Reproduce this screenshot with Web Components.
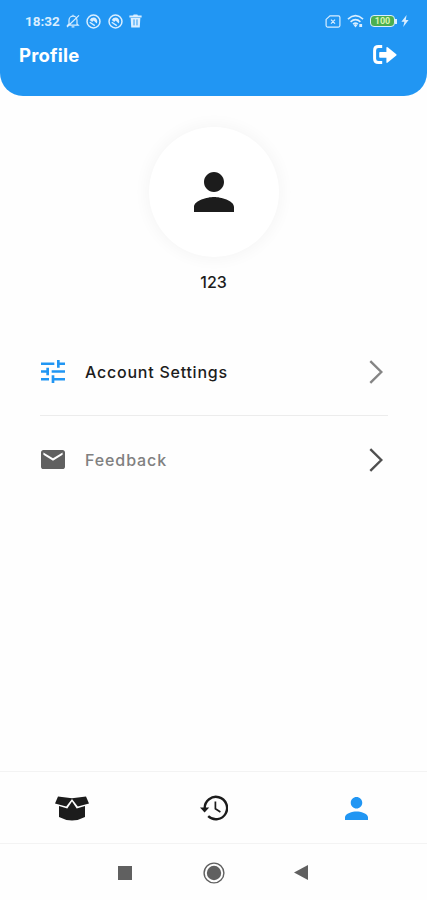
<!DOCTYPE html>
<html lang="en">
<head>
<meta charset="utf-8">
<meta name="viewport" content="width=device-width, initial-scale=1">
<title>Profile</title>
<style>
    body {
        margin: 0;
        background: #fefefe;
        color: #1c1c1c;
        font-family: Inter, "Open Sans", sans-serif;
    }
</style>
</head>
<body>
<profile-app></profile-app>

<script>
// name: [viewBox, markup]
const ICONS = {
    bell: ['0 0 14 14', '<path d="M3 10V6.2a4 4 0 0 1 8 0V10l1.2 1.2H1.8zM5.6 12.8h2.8M7 .7v1.4M1 13 13 1.4" fill="none" stroke="currentColor" stroke-width="1.2"/>'],
    shield: ['0 0 16 16', '<circle cx="8" cy="8" r="6.9" fill="none" stroke="currentColor" stroke-width="1.6"/><path d="M4 6.4Q5.6 3.6 8.4 3.8T12 7.6q0 1.6-.6 2.6L8.2 7 6.6 8.4z" fill="currentColor"/><path d="m4 8.8 5.4 3.6" stroke="currentColor" stroke-width="1.5"/>'],
    trash: ['0 0 14 14', '<path d="M.4 1.4h4l.6-.9h4l.6.9h4v2.2H.4zM1.8 4h10.4l-.6 9.6H2.4z" fill="currentColor"/><path d="M5.4 5.4v6M8.6 5.4v6" stroke="#2196f3" stroke-width="1"/>'],
    sim: ['0 0 16 13', '<path d="M5 .9h8.4q1.5 0 1.5 1.5v8.2q0 1.5-1.5 1.5H2.6q-1.5 0-1.5-1.5V4.4zM6 4.6l4 4M10 4.6l-4 4" fill="none" stroke="currentColor" stroke-width="1.2"/>'],
    wifi: ['0 0 18 14', '<path d="M1 5.1q8-6.8 16 0M3.8 7.8q5.2-4.4 10.4 0M6.4 10.2q2.6-2.2 5.2 0" fill="none" stroke="currentColor" stroke-width="1.7"/><path d="m7 11 2-1 2 1-2 2.4zM13 10h3v3h-3z" fill="currentColor"/>'],
    bolt: ['0 0 8 12', '<path d="M5.6 0 .4 6.8h3L2.2 12l5.4-7H4.8z" fill="currentColor"/>'],
    logout: ['0 0 24 20', '<path d="M9.2 1.6H5.4Q1.6 1.6 1.6 5.4v8.4q0 3.8 3.8 3.8h3.8" fill="none" stroke="currentColor" stroke-width="3"/><path d="M7 7q-.8 0-.8.8V12q0 .8.8.8h6.4v4.1q0 1.6 1.3.7l8.6-7q.7-.7 0-1.4l-8.6-7q-1.3-.9-1.3.7V7z" fill="currentColor"/>'],
    person: ['4 4 16 16', '<path d="M12 12c2.21 0 4-1.79 4-4s-1.79-4-4-4-4 1.79-4 4 1.79 4 4 4zm0 2c-2.67 0-8 1.34-8 4v2h16v-2c0-2.66-5.33-4-8-4z" fill="currentColor"/>'],
    tune: ['3 3 18 18', '<path d="M3 17v2h6v-2H3zM3 5v2h10V5H3zm10 16v-2h8v-2h-8v-2h-2v6h2zM7 9v2H3v2h4v2h2V9H7zm14 4v-2H11v2h10zm-6-4h2V7h4V5h-4V3h-2v6z" fill="currentColor"/>'],
    mail: ['2 4 20 16', '<path d="M20 4H4c-1.1 0-2 .9-2 2v12c0 1.1.9 2 2 2h16c1.1 0 2-.9 2-2V6c0-1.1-.9-2-2-2zm0 4-8 5-8-5V6l8 5 8-5v2z" fill="currentColor"/>'],
    chevron: ['0 0 14 24', '<path d="M1.3 1.2 12.3 12l-11 10.8" fill="none" stroke="currentColor" stroke-width="2.4"/>'],
    box: ['0 0 34 25', '<path d="M3 .6 17 2.2 31 .6l3 6.8-11.2 3.2L17 3l-5.8 7.6L0 7.4z" fill="currentColor"/><path d="m4 10 8.3 2.4L17 5.6l4.7 6.8L30 10v11q-13 7-26 0z" fill="currentColor"/>'],
    history: ['0 0 28 26', '<path d="M4.7 13A11.2 11.2 0 1 1 8.2 21.2" fill="none" stroke="currentColor" stroke-width="2.4"/><path d="M0 12.5h9.2l-4.6 5z" fill="currentColor"/><path d="M15.4 6.6v7.2l5 3.2" fill="none" stroke="currentColor" stroke-width="1.7"/>'],
    square: ['0 0 14 14', '<path d="M0 0h14v14H0z" fill="currentColor"/>'],
    home: ['0 0 22 22', '<circle cx="11" cy="11" r="9.9" fill="none" stroke="currentColor" stroke-width="1.4"/><circle cx="11" cy="11" r="7.2" fill="currentColor"/>'],
    back: ['0 0 14 15', '<path d="M14 0v15L0 7.5z" fill="currentColor"/>']
};

class UiIcon extends HTMLElement {
    connectedCallback() {
        const [box, markup] = ICONS[this.getAttribute('name')];
        this.attachShadow({ mode: 'open' });
        this.shadowRoot.innerHTML = `
            <style>
                :host { display: block; flex: none; }
                svg { display: block; }
            </style>
            <svg viewBox="${box}" width="${this.getAttribute('w')}" height="${this.getAttribute('h')}" preserveAspectRatio="none" aria-hidden="true">${markup}</svg>
        `;
    }
}
customElements.define('ui-icon', UiIcon);

class StatusBar extends HTMLElement {
    connectedCallback() {
        this.attachShadow({ mode: 'open' });
        this.shadowRoot.innerHTML = `
            <style>
                :host {
                    display: flex;
                    justify-content: space-between;
                    align-items: center;
                    height: 42px;
                    padding: 0 18px 0 25px;
                    box-sizing: border-box;
                    color: #d9eeff;
                }
                div { display: flex; align-items: center; }
                .left { gap: 6.5px; }
                .right { gap: 6px; }
                time {
                    width: 34px;
                    font: 700 13.5px/16px Roboto, sans-serif;
                    white-space: nowrap;
                }
                .battery {
                    width: 25px;
                    height: 12px;
                    box-sizing: border-box;
                    justify-content: center;
                    border: 1.5px solid #d9eeff;
                    border-radius: 4px;
                    background: #4caf50;
                    color: #d8f5b0;
                    font: 700 9px/9px Roboto, sans-serif;
                }
                .tip {
                    width: 2px;
                    height: 5px;
                    margin: 0 -2px 0 -6px;
                    background: #d9eeff;
                }
            </style>
            <div class="left">
                <time>18:32</time>
                <ui-icon name="bell" w="14" h="14"></ui-icon>
                <ui-icon name="shield" w="15" h="15"></ui-icon>
                <ui-icon name="shield" w="15" h="15"></ui-icon>
                <ui-icon name="trash" w="13" h="14"></ui-icon>
            </div>
            <div class="right">
                <ui-icon name="sim" w="16" h="13"></ui-icon>
                <ui-icon name="wifi" w="17" h="14"></ui-icon>
                <div class="battery">100</div>
                <span class="tip"></span>
                <ui-icon name="bolt" w="8" h="12"></ui-icon>
            </div>
        `;
    }
}
customElements.define('status-bar', StatusBar);

class AppHeader extends HTMLElement {
    connectedCallback() {
        this.attachShadow({ mode: 'open' });
        this.shadowRoot.innerHTML = `
            <style>
                :host {
                    display: block;
                    flex: none;
                    height: 96px;
                    background: #2196f3;
                    color: #fff;
                    border-radius: 0 0 23px 23px;
                }
                .title {
                    display: flex;
                    justify-content: space-between;
                    align-items: center;
                    height: 26px;
                    padding: 0 30px 0 19px;
                }
                h1 {
                    margin: 0;
                    font-size: 18.5px;
                    line-height: 26px;
                    font-weight: 700;
                    letter-spacing: .2px;
                }
            </style>
            <status-bar></status-bar>
            <div class="title">
                <h1><slot></slot></h1>
                <ui-icon name="logout" w="24" h="20"></ui-icon>
            </div>
        `;
    }
}
customElements.define('app-header', AppHeader);

class UserAvatar extends HTMLElement {
    connectedCallback() {
        this.attachShadow({ mode: 'open' });
        this.shadowRoot.innerHTML = `
            <style>
                :host {
                    display: flex;
                    flex-direction: column;
                    align-items: center;
                    padding-top: 31px;
                }
                .circle {
                    display: flex;
                    align-items: center;
                    justify-content: center;
                    width: 130px;
                    height: 130px;
                    border-radius: 50%;
                    background: #fff;
                    box-shadow: 0 0 14px 4px rgba(0, 0, 0, .03);
                }
                .name {
                    margin-top: 14px;
                    font-size: 16px;
                    line-height: 22px;
                    font-weight: 500;
                }
            </style>
            <div class="circle"><ui-icon name="person" w="40" h="40"></ui-icon></div>
            <div class="name"><slot></slot></div>
        `;
    }
}
customElements.define('user-avatar', UserAvatar);

class MenuRow extends HTMLElement {
    connectedCallback() {
        this.attachShadow({ mode: 'open' });
        this.shadowRoot.innerHTML = `
            <style>
                :host {
                    display: flex;
                    align-items: center;
                    height: 87px;
                    padding: 0 5px 0 1px;
                    font-size: 16px;
                    line-height: 22px;
                    font-weight: 500;
                }
                .label {
                    flex: 1;
                    margin-left: 20px;
                    letter-spacing: var(--tracking, 0);
                }
                .start { color: var(--icon); }
                .end { color: var(--arrow); }
            </style>
            <ui-icon class="start" name="${this.getAttribute('icon')}" w="24" h="${this.getAttribute('icon-height')}"></ui-icon>
            <span class="label"><slot></slot></span>
            <ui-icon class="end" name="chevron" w="14" h="24"></ui-icon>
        `;
    }
}
customElements.define('menu-row', MenuRow);

class TabBar extends HTMLElement {
    connectedCallback() {
        this.attachShadow({ mode: 'open' });
        this.shadowRoot.innerHTML = `
            <style>
                :host {
                    display: grid;
                    grid-template-columns: repeat(3, 1fr);
                    place-items: center;
                    height: 73px;
                    padding: 1px 0 0 1px;
                    box-sizing: border-box;
                    border-top: 1px solid #f3f3f3;
                    border-bottom: 1px solid #f3f3f3;
                }
                .active { color: #2196f3; }
            </style>
            <ui-icon name="box" w="34" h="25"></ui-icon>
            <ui-icon name="history" w="28" h="26"></ui-icon>
            <ui-icon class="active" name="person" w="23" h="23"></ui-icon>
        `;
    }
}
customElements.define('tab-bar', TabBar);

class SystemNav extends HTMLElement {
    connectedCallback() {
        this.attachShadow({ mode: 'open' });
        this.shadowRoot.innerHTML = `
            <style>
                :host {
                    display: flex;
                    align-items: center;
                    gap: 71px;
                    height: 56px;
                    padding: 1px 0 0 118px;
                    box-sizing: border-box;
                    color: #606060;
                }
                ui-icon:last-child { margin-left: -2px; }
            </style>
            <ui-icon name="square" w="14" h="14"></ui-icon>
            <ui-icon name="home" w="22" h="22"></ui-icon>
            <ui-icon name="back" w="14" h="15"></ui-icon>
        `;
    }
}
customElements.define('system-nav', SystemNav);

class ProfileApp extends HTMLElement {
    connectedCallback() {
        this.attachShadow({ mode: 'open' });
        this.shadowRoot.innerHTML = `
            <style>
                :host {
                    display: flex;
                    flex-direction: column;
                    height: 900px;
                    overflow: hidden;
                }
                main { flex: 1; }
                .menu { padding: 35px 39px 0 40px; }
                .account {
                    border-bottom: 1px solid #ececec;
                    --icon: #2196f3;
                    --arrow: #858585;
                    --tracking: .76px;
                }
                .feedback {
                    color: #808080;
                    --icon: #606060;
                    --arrow: #4f4f4f;
                    --tracking: .9px;
                }
            </style>
            <app-header>Profile</app-header>
            <main>
                <user-avatar>123</user-avatar>
                <div class="menu">
                    <menu-row class="account" icon="tune" icon-height="23">Account Settings</menu-row>
                    <menu-row class="feedback" icon="mail" icon-height="19">Feedback</menu-row>
                </div>
            </main>
            <tab-bar></tab-bar>
            <system-nav></system-nav>
        `;
    }
}
customElements.define('profile-app', ProfileApp);
</script>
</body>
</html>
